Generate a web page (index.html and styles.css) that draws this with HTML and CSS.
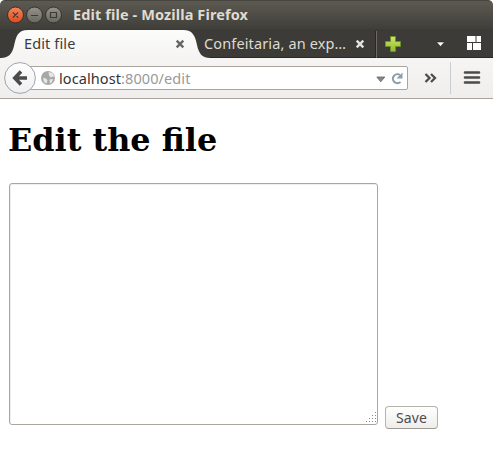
FILE: index.html
```html
<!DOCTYPE html>
<html lang="en">
<head>
<meta charset="utf-8">
<title>Edit file</title>
<link rel="stylesheet" href="styles.css">
</head>
<body>
<div class="window">
  <header class="titlebar">
    <svg class="controls" width="56" height="18" viewBox="0 0 56 18">
      <defs>
        <linearGradient id="red" x2="0" y2="1"><stop stop-color="#f58660"/><stop offset="1" stop-color="#df4a1a"/></linearGradient>
        <linearGradient id="gray" x2="0" y2="1"><stop stop-color="#95938b"/><stop offset="1" stop-color="#686660"/></linearGradient>
      </defs>
      <g stroke="#33322d"><circle cx="8.5" cy="9" r="8" fill="url(#red)"/><circle cx="27.5" cy="9" r="8" fill="url(#gray)"/><circle cx="46.5" cy="9" r="8" fill="url(#gray)"/></g>
      <g fill="none" stroke="#3c3a34" stroke-width="1.2"><path d="M5.8 6.3l5.4 5.4M11.2 6.3l-5.4 5.4M24 9.5h7M43.5 6.5h6v5h-6z"/></g>
    </svg>
    <span class="window-title">Edit file - Mozilla Firefox</span>
  </header>
  <nav class="tabs">
    <div class="tab active">
      <svg class="tab-shape" width="212" height="29" viewBox="0 0 212 29"><defs><linearGradient id="tab" x2="0" y2="1"><stop stop-color="#fcfcfb"/><stop offset="1" stop-color="#f5f4f3"/></linearGradient></defs><path d="M0 29C9 29 12 25 14 17C16 7 18 1 28 1H183C193 1 195 7 197 16C199 25 202 29 211 29Z" fill="url(#tab)"/></svg>
      <span class="tab-label first">Edit file</span>
      <svg class="close" width="10" height="10" viewBox="0 0 10 10"><path d="M1.7 1.7l6.6 6.6M8.3 1.7L1.7 8.3" stroke="#666" stroke-width="2.4"/></svg>
    </div>
    <div class="tab">
      <span class="tab-label second">Confeitaria, an exp…</span>
      <svg class="close" width="10" height="10" viewBox="0 0 10 10"><path d="M1.7 1.7l6.6 6.6M8.3 1.7L1.7 8.3" stroke="#e4e2dc" stroke-width="2.4"/></svg>
    </div>
    <svg class="tab-tools" width="118" height="29" viewBox="0 0 118 29">
      <defs><linearGradient id="plus" x2="0" y2="1"><stop stop-color="#d0e56c"/><stop offset="1" stop-color="#93b92c"/></linearGradient></defs>
      <path d="M.5 2v27" stroke="#292824"/><path d="M1.5 2v27" stroke="#6c6961"/>
      <path d="M15.500 7.500h5v5h5v5h-5v5h-5v-5h-5v-5h5z" fill="url(#plus)" stroke="#6b9128"/>
      <path d="M61.500 13h8l-4 4.500z" fill="#fff" stroke="#24231f" stroke-width=".6"/>
      <path d="M92 7h8.500v6h-8.500zM101.500 7h4.500v6h-4.500zM92 14h5v7h-5zM98 14h8v7h-8z" fill="#fff"/>
    </svg>
  </nav>
  <section class="toolbar">
    <div class="address">
      <svg class="globe" width="16" height="16" viewBox="0 0 16 16"><circle cx="8" cy="8" r="7" fill="#a8a8a8"/><path d="M8.500 2l4 1 2 4-2-.5-2 1-1.500-2.500zM3 8l3 .5 1.500 2-1 3-2.500-1.500zM9.500 9.500l3.500-.5-1 3-2 1.500z" fill="#e8e8e8"/></svg>
      <span class="url"><b>localhost</b>:8000/edit</span>
      <svg class="url-tools" width="31" height="20" viewBox="0 0 31 20"><path d="M.8 9h8l-4 4.800z" fill="#888" stroke="#666" stroke-width=".8"/><path d="M24 7A4.500 4.500 0 1 0 24.500 14" fill="none" stroke="#8e9dab" stroke-width="2.100"/><path d="M26.500 4.500v6h-6z" fill="#8e9dab"/></svg>
    </div>
    <svg class="back" width="32" height="32" viewBox="0 0 32 32"><defs><linearGradient id="back" x2="0" y2="1"><stop stop-color="#fff"/><stop offset="1" stop-color="#efeff0"/></linearGradient></defs><circle cx="16" cy="16" r="15.400" fill="url(#back)" stroke="#9ba5b0"/><path d="M17 9.500L10.800 16l6.200 6.500M11 16H23" fill="none" stroke="#4b4b4b" stroke-width="3.600"/></svg>
    <svg class="menu-tools" width="85" height="39" viewBox="0 0 85 39"><path d="M17.500 15l4 4-4 4M23 15l4 4-4 4" fill="none" stroke="#4c4c4c" stroke-width="2.300"/><path class="divider" d="M42.500 3v32" stroke="#c7cdd2"/><path d="M57 13.500h14M57 18.500h14M57 23.500h14" stroke="#4b4b4b" stroke-width="2.600" stroke-linecap="round"/></svg>
  </section>
  <main>
    <h1>Edit the file</h1>
    <form>
      <div class="editor"><textarea aria-label="File contents"></textarea><svg class="grip" width="12" height="12" viewBox="0 0 12 12"><path d="M10 1.500h1M7 4.500h1M10 4.500h1M4 7.500h1M7 7.500h1M10 7.500h1M1 10.500h1M4 10.500h1M7 10.500h1M10 10.500h1" stroke="#888"/></svg></div>
      <button type="button"><span>Save</span></button>
    </form>
  </main>
</div>
</body>
</html>
```
FILE: styles.css
```css
* { box-sizing: border-box; }
body { margin: 0; background: #fff; font-family: "Noto Sans", sans-serif; }
svg { display: block; flex: none; }
.window { width: 493px; height: 468px; overflow: hidden; }
.titlebar { height: 29px; display: flex; align-items: center; padding-left: 7px; background: linear-gradient(#5c5952, #5a574f 3px, #3f3e39); border-top: 1px solid #47453f; border-radius: 5px 5px 0 0; }
.window-title { margin: -2px 0 0 10px; color: #dfdbd2; font-size: 14.5px; font-weight: 700; line-height: 20px; letter-spacing: .12px; white-space: nowrap; }
.tabs { height: 29px; display: flex; background: #3c3b37; border-bottom: 1px solid #292824; }
.tab { position: relative; display: flex; align-items: center; width: 187px; color: #dfdbd2; font-size: 14.5px; }
.tab.active { width: 198px; color: #3c3c3c; }
.tab-shape { position: absolute; left: 0; top: 0; z-index: 0; }
.tab-label { position: relative; white-space: nowrap; line-height: 28px; }
.first { width: 151px; margin-left: 24px; letter-spacing: .12px; }
.second { width: 151px; margin-left: 6px; letter-spacing: .13px; }
.close { position: relative; margin-top: 2px; }
.tab-tools { margin-left: -10px; }
.toolbar { height: 41px; display: flex; align-items: center; padding-left: 4px; background: linear-gradient(#f6f5f4, #efeeed); border-bottom: 1px solid #aaa69e; }
.back { order: 1; position: relative; }
.address { order: 2; width: 388px; height: 24px; margin-left: -16px; padding-left: 19px; display: flex; align-items: center; border: 1px solid #aaa69e; border-radius: 2px; background: #fff; }
.url { flex: 1; margin-left: 3px; color: #999; font-size: 14.5px; line-height: 20px; letter-spacing: .09px; white-space: nowrap; }
.url b { color: #333; font-weight: 400; }
.menu-tools { order: 3; }
main { padding: 22px 8px 0 9px; }
h1 { margin: 0 0 0 -1px; font: 700 31.85px/38px "DejaVu Serif", serif; color: #000; white-space: nowrap; }
form { display: flex; align-items: flex-end; margin-top: 24px; }
.editor { position: relative; width: 369px; height: 242px; }
textarea { display: block; width: 100%; height: 100%; resize: none; border: 1px solid #aaa69e; border-radius: 3px; background: #fff; outline: 0; box-shadow: inset 1px 1px #f0efed; }
.grip { position: absolute; right: 1px; bottom: 2px; }
button { width: 53px; height: 23px; margin: 0 0 -4px 7px; padding: 0; border: 1px solid #b6b2ac; border-bottom-color: #9d9992; border-radius: 4px; background: linear-gradient(#fff, #eeedeb); color: #4c4c4c; font: 14px/20px "Noto Sans", sans-serif; letter-spacing: .1px; }
```
